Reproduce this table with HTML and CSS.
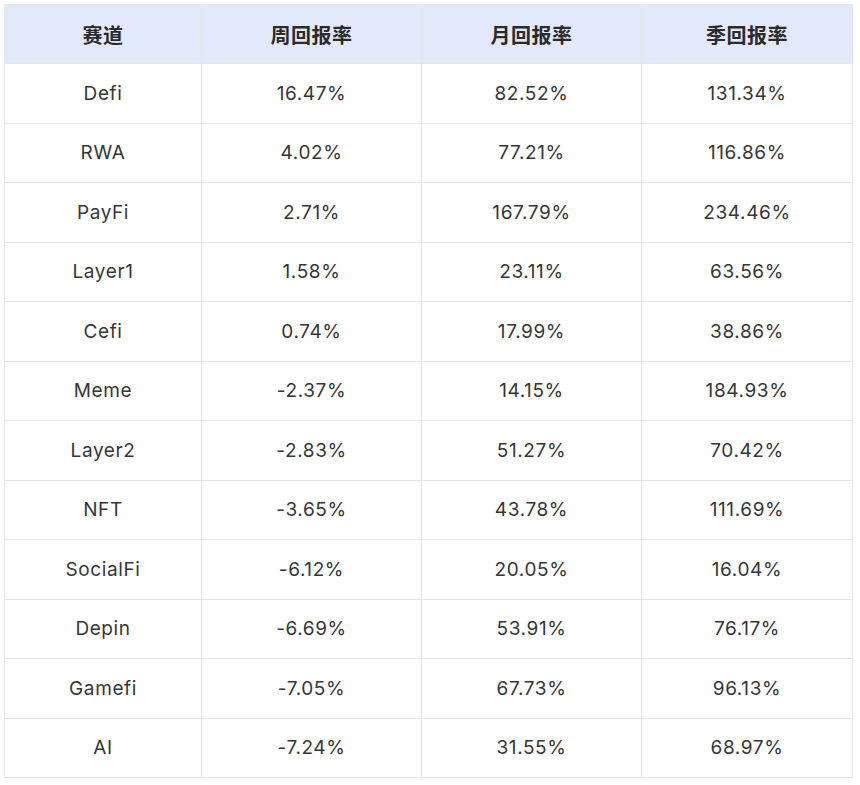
FILE: index.html
```html
<!DOCTYPE html>
<html lang="zh">
<head>
<meta charset="utf-8">
<link rel="stylesheet" href="styles.css">
</head>
<body>
<table class="returns">
  <colgroup>
    <col class="c1"><col class="c2"><col class="c3"><col class="c4">
  </colgroup>
  <thead>
    <tr><th>赛道</th><th>周回报率</th><th>月回报率</th><th>季回报率</th></tr>
  </thead>
  <tbody>
    <tr><td>Defi</td><td>16.47%</td><td>82.52%</td><td>131.34%</td></tr>
    <tr><td>RWA</td><td>4.02%</td><td>77.21%</td><td>116.86%</td></tr>
    <tr><td>PayFi</td><td>2.71%</td><td>167.79%</td><td>234.46%</td></tr>
    <tr><td>Layer1</td><td>1.58%</td><td>23.11%</td><td>63.56%</td></tr>
    <tr><td>Cefi</td><td>0.74%</td><td>17.99%</td><td>38.86%</td></tr>
    <tr><td>Meme</td><td>-2.37%</td><td>14.15%</td><td>184.93%</td></tr>
    <tr><td>Layer2</td><td>-2.83%</td><td>51.27%</td><td>70.42%</td></tr>
    <tr><td>NFT</td><td>-3.65%</td><td>43.78%</td><td>111.69%</td></tr>
    <tr><td>SocialFi</td><td>-6.12%</td><td>20.05%</td><td>16.04%</td></tr>
    <tr><td>Depin</td><td>-6.69%</td><td>53.91%</td><td>76.17%</td></tr>
    <tr><td>Gamefi</td><td>-7.05%</td><td>67.73%</td><td>96.13%</td></tr>
    <tr><td>AI</td><td>-7.24%</td><td>31.55%</td><td>68.97%</td></tr>
  </tbody>
</table>
</body>
</html>
```
FILE: styles.css
```css
html, body {
  margin: 0;
  padding: 0;
  background: #ffffff;
}
body {
  padding: 4px;
  font-family: Inter, "Noto Sans CJK SC", sans-serif;
  color: #333333;
}
.returns {
  border-collapse: collapse;
  table-layout: fixed;
  width: 848px;
}
.c1 { width: 197px; }
.c2 { width: 220px; }
.c3 { width: 220px; }
.c4 { width: 211px; }
.returns th,
.returns td {
  border: 1px solid #e6e6e6;
  text-align: center;
  vertical-align: middle;
  height: 59.5px;
  padding: 0;
  box-sizing: border-box;
}
.returns th {
  background: #e2e9fb;
  font-size: 20px;
  font-weight: 600;
  color: #2b2b2b;
  height: 59px;
  letter-spacing: 0.5px;
}
.returns td {
  font-size: 19px;
  font-weight: 400;
  letter-spacing: 0.6px;
  color: #363636;
}
```
